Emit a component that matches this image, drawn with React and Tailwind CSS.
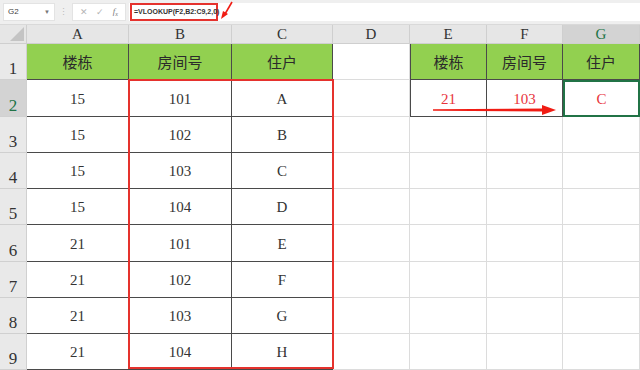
import React from "react";

const COLS = ["A", "B", "C", "D", "E", "F", "G"];
const ROW_H = [36, 37, 36, 36, 36, 37, 36, 36, 36];

const data = [
  ["15", "101", "A"],
  ["15", "102", "B"],
  ["15", "103", "C"],
  ["15", "104", "D"],
  ["21", "101", "E"],
  ["21", "102", "F"],
  ["21", "103", "G"],
  ["21", "104", "H"],
];

const serif = { fontFamily: '"Liberation Serif", "Noto Sans CJK SC", serif' };
const cjk = { fontFamily: '"Noto Sans CJK SC", sans-serif' };

function FormulaBar() {
  return (
    <div className="h-[25px] bg-[#efefef] flex items-center border-b border-[#d9d9d9] relative">
      <div className="ml-[3px] w-[52px] h-[18px] bg-white border border-[#e3e3e3] flex items-center justify-between px-[4px] text-[8px] text-[#444]" style={{ fontFamily: '"Liberation Sans", sans-serif' }}>
        <span>G2</span>
        <span className="text-[6px] text-[#777]">▼</span>
      </div>
      <div className="w-[17px] flex justify-center text-[9px] text-[#bbb]">⋮</div>
      <div className="w-[54px] h-[18px] bg-white border border-[#e3e3e3] flex items-center justify-around px-[3px] text-[9px] text-[#b5b5b5]">
        <span>✕</span>
        <span>✓</span>
        <span className="italic text-[#777]" style={serif}>f<sub className="text-[6px]">x</sub></span>
      </div>
      <div className="flex-1 h-[18px] bg-white ml-[3px] flex items-center">
        <div className="ml-[1px] h-[18px] w-[88px] border-2 border-[#e5322d] flex items-center pl-[2px] text-[7px] font-bold text-[#333] whitespace-nowrap" style={{ fontFamily: '"Liberation Sans", sans-serif' }}>
          =VLOOKUP(F2,B2:C9,2,0)
        </div>
      </div>
      <svg className="absolute left-[219px] top-0" width="16" height="22" viewBox="0 0 16 22">
        <line x1="13" y1="2" x2="6" y2="14" stroke="#f01c14" strokeWidth="1.6" />
        <polygon points="2,19 4,11 9,14" fill="#f01c14" />
      </svg>
    </div>
  );
}

function HeaderRow() {
  return (
    <div className="grid grid-cols-[27px_102px_103px_101px_77px_77px_76px_77px] h-[19px] bg-[#e6e6e6] border-b border-[#cfcfcf]">
      <div className="relative border-r border-[#cfcfcf]">
        <svg className="absolute right-[2px] bottom-[2px]" width="14" height="14" viewBox="0 0 14 14">
          <polygon points="14,0 14,14 0,14" fill="#c4c4c4" />
        </svg>
      </div>
      {COLS.map((c) => (
        <div
          key={c}
          className={`flex items-end justify-center pb-[1px] text-[15px] leading-none border-r border-[#cfcfcf] ${
            c === "G" ? "bg-[#d3d3d3] text-[#217346]" : "text-[#333]"
          }`}
          style={serif}
        >
          {c}
        </div>
      ))}
    </div>
  );
}

function Cell({ children, kind, red, selected, first }) {
  let cls = "flex items-center justify-center border-r border-b text-[15px] ";
  if (kind === "head") cls += "bg-[#92d050] border-[#4a4a4a] text-[#2b2b2b] ";
  else if (kind === "data") cls += "bg-white border-[#4a4a4a] text-[#333] ";
  else cls += "bg-white border-[#dcdcdc] ";
  if (first) cls += "border-l border-l-[#4a4a4a] ";
  if (red) cls += "text-[#e8343c] ";
  if (selected) cls = "flex items-center justify-center bg-white border-2 border-[#217346] text-[15px] text-[#e8343c] ";
  return (
    <div className={cls} style={kind === "head" ? cjk : serif}>
      <span className="translate-y-[1px]">{children}</span>
    </div>
  );
}

export default function App() {
  return (
    <div className="w-[640px] h-[370px] overflow-hidden bg-white relative">
      <FormulaBar />
      <HeaderRow />
      <div>
        {ROW_H.map((h, i) => {
          const r = i + 1;
          const lookup = i >= 1 ? data[i - 1] : null;
          return (
            <div
              key={r}
              className="grid grid-cols-[27px_102px_103px_101px_77px_77px_76px_77px]"
              style={{ height: h }}
            >
              <div
                className={`flex items-end justify-center pb-[2px] text-[17px] leading-none border-r border-b border-[#d0d0d0] ${
                  r === 2 ? "bg-[#d3d3d3] text-[#217346]" : "bg-[#e9e9e9] text-[#333]"
                }`}
                style={serif}
              >
                {r}
              </div>
              {r === 1 ? (
                <>
                  <Cell kind="head">楼栋</Cell>
                  <Cell kind="head">房间号</Cell>
                  <Cell kind="head">住户</Cell>
                  <Cell kind="empty" />
                  <Cell kind="head" first>楼栋</Cell>
                  <Cell kind="head">房间号</Cell>
                  <Cell kind="head">住户</Cell>
                </>
              ) : (
                <>
                  <Cell kind="data">{lookup[0]}</Cell>
                  <Cell kind="data">{lookup[1]}</Cell>
                  <Cell kind="data">{lookup[2]}</Cell>
                  <Cell kind="empty" />
                  {r === 2 ? (
                    <>
                      <Cell kind="data" red first>21</Cell>
                      <Cell kind="data" red>103</Cell>
                      <Cell selected>C</Cell>
                    </>
                  ) : (
                    <>
                      <Cell kind="empty" />
                      <Cell kind="empty" />
                      <Cell kind="empty" />
                    </>
                  )}
                </>
              )}
            </div>
          );
        })}
      </div>

      {/* lookup range outline B2:C9 */}
      <div className="absolute left-[128px] top-[79px] w-[206px] h-[290px] border-2 border-[#e5322d] pointer-events-none" />

      {/* arrow across the lookup keys */}
      <svg className="absolute left-[430px] top-[103px]" width="130" height="14" viewBox="0 0 130 14">
        <polygon points="3,6.2 114,5.5 114,8.5 3,7.8" fill="#f01c14" />
        <polygon points="112,2 126,7 112,12" fill="#f01c14" />
      </svg>
    </div>
  );
}
